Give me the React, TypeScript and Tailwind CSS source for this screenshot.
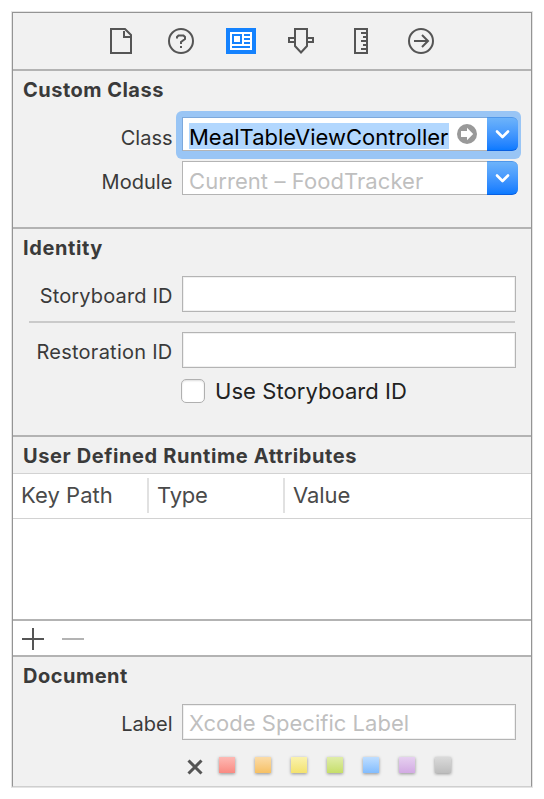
import type { ReactNode } from "react";

function Heading({ children, cls }: { children: ReactNode; cls: string }) {
  return (
    <h2 className="pl-[10px] text-[20px] leading-[24px] font-bold whitespace-nowrap text-[#3a3a3a]">
      <span className={cls}>{children}</span>
    </h2>
  );
}

function Label({ children, cls }: { children: ReactNode; cls: string }) {
  return (
    <div className="flex w-[169px] shrink-0 justify-end pr-[9.5px] text-[20px] leading-[24px] whitespace-nowrap text-[#3a3a3a]">
      <span className={cls}>{children}</span>
    </div>
  );
}

function DropButton() {
  return (
    <div className="flex h-[34px] w-[31px] shrink-0 items-center justify-center rounded-r-[6px] border-t border-b border-t-[#4f97ea] border-b-[#0a5fe0] bg-linear-to-b from-[#6db3fa] to-[#0a7aff]">
      <svg width="31" height="32" viewBox="0 0 31 32" fill="none" stroke="#fff" strokeWidth="2.6" strokeLinecap="round" strokeLinejoin="round">
        <path d="M10 13.500 15.500 19 21 13.500" />
      </svg>
    </div>
  );
}

function Field({ children }: { children?: ReactNode }) {
  return (
    <div className="h-[36px] w-[334px] border border-[#b4b4b4] bg-white pt-[5px] pl-[6px] text-[22px] leading-[26px] whitespace-nowrap text-[#bfbfbf] shadow-[inset_0_0_0_1px_#f0f0f0]">
      {children}
    </div>
  );
}

const swatches = [
  "from-[#fdb9b4] to-[#f98a82]",
  "from-[#fbdca8] to-[#f6c063]",
  "from-[#faf2ad] to-[#f3e26d]",
  "from-[#e0eda9] to-[#c6de68]",
  "from-[#bfdeff] to-[#82bcfd]",
  "from-[#e6d0f0] to-[#d2aae3]",
  "from-[#dadada] to-[#bdbdbd]",
];

function Toolbar() {
  return (
    <div className="flex h-[58px] items-start justify-center gap-[30px] border-b-2 border-[#b3b3b3] pt-[13px] pr-[2px]">
      <svg width="30" height="30" viewBox="0 0 30 30" fill="none" stroke="#555" strokeWidth="2">
        <path d="M5 3H19L25 9V27H5Z" />
        <path d="M18 5V11H24" />
      </svg>
      <svg width="30" height="30" viewBox="0 0 30 30" fill="none" stroke="#555" strokeWidth="2">
        <circle cx="15" cy="15" r="12" />
        <path d="M11 12.500V11L12.500 9.500H17.500L19 11V13L15 16V18M15 20V22" />
      </svg>
      <svg width="30" height="30" viewBox="0 0 30 30">
        <path fill="#1482fe" d="M0 2H30V28H0Z" />
        <path fill="#fff" d="M4 6H26V24H4Z" />
        <path fill="none" stroke="#1482fe" strokeWidth="2" d="M7 9H15V17H7ZM18 9H24M18 13H24M18 17H24M6 21H24" />
      </svg>
      <svg width="30" height="30" viewBox="0 0 30 30" fill="none" stroke="#555" strokeWidth="2">
        <path d="M9 3H21V20L15 26.500 9 20ZM9 12H3V16H9M21 12H27V16H21" />
      </svg>
      <svg width="30" height="30" viewBox="0 0 30 30" fill="none" stroke="#555" strokeWidth="2">
        <path d="M9 3H21V27H9ZM21 7H15M21 11H17M21 15H15M21 19H17M21 23H15" />
      </svg>
      <svg width="30" height="30" viewBox="0 0 30 30" fill="none" stroke="#555" strokeWidth="2">
        <circle cx="15" cy="15" r="12" />
        <path d="M8 15H22M16 9 22 15 16 21" />
      </svg>
    </div>
  );
}

export default function App() {
  return (
    <div className="h-[799px] w-[544px] overflow-hidden bg-white pt-[12px] pl-[12px] font-['Inter','Liberation_Sans',sans-serif]">
      <div className="h-[775px] w-[520px] border border-[#949494] border-b-[#cfcfcf] bg-[#f1f1f1] shadow-[0_0_0_1px_#e4e4e4]">
        <Toolbar />

        <section className="h-[158px] border-b-2 border-[#b3b3b3] pt-[7px]">
          <Heading cls="tracking-[0.48px]">Custom Class</Heading>
          <div className="relative mt-[15px] flex h-[34px]">
            <div className="absolute -top-[6px] left-[163px] h-[48px] w-[345px] rounded-[6px] bg-[#99c5f5]" />
            <div className="relative pt-[9px]">
              <Label cls="">Class</Label>
            </div>
            <div className="relative flex">
              <div className="flex h-[34px] w-[305px] items-start border border-r-0 border-t-[#7da9dc] border-b-[#b4b4b4] border-l-[#7da9dc] bg-white pt-[5px] pl-[6px]">
                <div className="h-[26px] w-[260px] bg-[#b2d7fe] text-[22px] leading-[28px] whitespace-nowrap text-black">
                  <span>MealTableViewController</span>
                </div>
                <svg className="mt-[1px] ml-[8px]" width="20" height="20" viewBox="0 0 20 20">
                  <circle cx="10" cy="10" r="10" fill="#999" />
                  <path fill="#fff" d="M4 7H10V3.800L16.200 10 10 16.200V13H4Z" />
                </svg>
              </div>
              <DropButton />
            </div>
          </div>
          <div className="mt-[10px] flex h-[34px]">
            <div className="pt-[9px]">
              <Label cls="tracking-[0.06px]">Module</Label>
            </div>
            <div className="h-[34px] w-[305px] border border-r-0 border-[#b4b4b4] bg-white pt-[6px] pl-[6px] text-[22px] leading-[26px] whitespace-nowrap text-[#bfbfbf]">
              <span className="tracking-[0.07px]">Current – FoodTracker</span>
            </div>
            <DropButton />
          </div>
        </section>

        <section className="h-[208px] border-b-2 border-[#b3b3b3] pt-[7px]">
          <Heading cls="tracking-[0.6px]">Identity</Heading>
          <div className="mt-[16px] flex h-[36px]">
            <div className="pt-[8px]">
              <Label cls="tracking-[0.14px]">Storyboard ID</Label>
            </div>
            <Field />
          </div>
          <div className="mt-[9px] ml-[16px] h-[2px] w-[486px] bg-[#cacaca]" />
          <div className="mt-[9px] flex h-[36px]">
            <div className="pt-[8px]">
              <Label cls="tracking-[0.25px]">Restoration ID</Label>
            </div>
            <Field />
          </div>
          <div className="mt-[11px] ml-[168px] flex h-[24px]">
            <div className="h-[24px] w-[24px] rounded-[5px] border border-[#b0b0b0] bg-white shadow-[inset_0_1px_2px_#ddd]" />
            <div className="ml-[10px] text-[22px] leading-[24px] whitespace-nowrap text-[#222]">
              <span className="tracking-[0.06px]">Use Storyboard ID</span>
            </div>
          </div>
        </section>

        <section className="bg-white">
          <div className="h-[37px] border-b border-[#d2d2d2] bg-[#f1f1f1] pt-[7px]">
            <Heading cls="tracking-[0.61px]">User Defined Runtime Attributes</Heading>
          </div>
          <div className="flex h-[45px] border-b border-[#d2d2d2] text-[22px] leading-[26px] whitespace-nowrap text-[#4a4a4a]">
            <div className="w-[134px] pt-[8px] pl-[8px]">
              <span className="tracking-[0.05px]">Key Path</span>
            </div>
            <div className="mt-[4px] h-[35px] w-[136px] border-l-2 border-[#e1e1e1] pt-[4px] pl-[8px]">
              <span className="tracking-[-0.2px]">Type</span>
            </div>
            <div className="mt-[4px] h-[35px] border-l-2 border-[#e1e1e1] pt-[4px] pl-[8px]">
              <span className="tracking-[-0.05px]">Value</span>
            </div>
          </div>
          <div className="h-[102px] border-b-2 border-[#b3b3b3]" />
          <div className="flex h-[36px] border-b-2 border-[#b3b3b3] pt-[7px] pl-[9px]">
            <svg width="62" height="22" viewBox="0 0 62 22" fill="none" strokeWidth="2">
              <path stroke="#555" d="M0 11H22M11 0V22" />
              <path stroke="#b3b3b3" d="M40 11H62" />
            </svg>
          </div>
        </section>

        <section className="pt-[7px]">
          <Heading cls="tracking-[0.5px]">Document</Heading>
          <div className="mt-[16px] flex h-[36px]">
            <div className="pt-[8px]">
              <Label cls="">Label</Label>
            </div>
            <Field>
              <span className="tracking-[0.03px]">Xcode Specific Label</span>
            </Field>
          </div>
          <div className="mt-[17px] flex items-start gap-[20px] pl-[174px]">
            <svg className="mt-[2px] -mr-[4px]" width="16" height="16" viewBox="0 0 16 16" fill="none" stroke="#555" strokeWidth="3">
              <path d="M1.500 1.500 14.500 14.500M14.500 1.500 1.500 14.500" />
            </svg>
            {swatches.map((s) => (
              <div key={s} className={"h-[16px] w-[16px] bg-linear-to-b shadow-[0_1px_3px_rgba(0,0,0,0.4)] " + s} />
            ))}
          </div>
        </section>
      </div>
    </div>
  );
}
